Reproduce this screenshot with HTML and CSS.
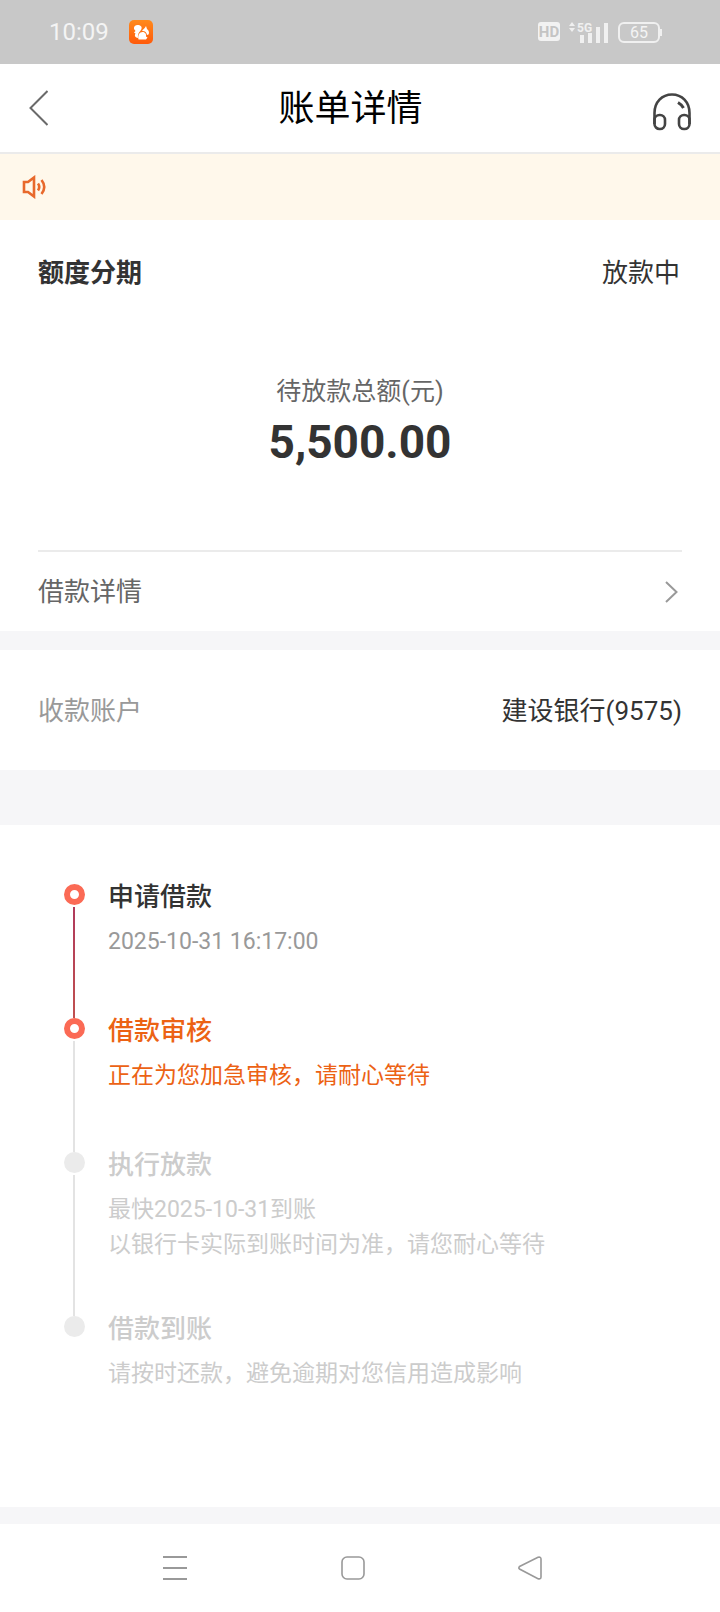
FILE: index.html
```
<!DOCTYPE html>
<html lang="zh-CN">
<head>
    <meta charset="UTF-8">
    <meta name="viewport" content="width=device-width, initial-scale=1.0">
    <title>账单详情</title>
    <link rel="stylesheet" href="styles.css">
</head>
<body>
    <div class="status-bar">
        <span class="time">10:09</span>
        <svg class="app-icon" width="24" height="24" viewBox="0 0 24 24">
            <defs>
                <linearGradient id="appBg" x1="0" y1="0" x2="0" y2="1">
                    <stop offset="0" stop-color="#ff8a1c"/>
                    <stop offset="1" stop-color="#ff5a0a"/>
                </linearGradient>
            </defs>
            <rect width="24" height="24" rx="5" fill="url(#appBg)"/>
            <!-- squirrel: tail, head, body -->
            <path d="M5 9 C4.500 6 7 4.500 9.500 5 C12.500 5.500 13.500 7.500 12 10 C10.500 12 8.500 13.500 9 18 C6.500 17.500 5 16 6.500 13.500 L5 12.500 L6.500 11 Z" fill="#fff"/>
            <path d="M17 6 L18 9 C20 10.500 20.500 13 19.500 14.500 L18 15 C17.500 12 15.500 10.500 13 11 C14 9 16 8.500 17 6 Z" fill="#fff"/>
            <path d="M9.500 19.500 C8.500 15 10.500 12 13.500 12 C16.500 12 17.500 14.500 17 16.500 L18.500 17.500 L17 19.500 Z" fill="#fff"/>
        </svg>
        <div class="status-right">
            <svg width="22" height="20" viewBox="0 0 22 20">
                <rect width="22" height="19" rx="3" fill="#f2f2f2"/>
                <text class="hd-text" x="11" y="15" text-anchor="middle">HD</text>
            </svg>
            <svg width="40" height="24" viewBox="0 0 40 24" fill="#f0f0f0">
                <path d="M4 2 L7 6 H1 Z M1 8 H7 L4 12 Z"/>
                <text class="net-text" x="9" y="12">5G</text>
                <rect x="12" y="15" width="4" height="8"/>
                <rect x="20" y="13" width="4" height="10"/>
                <rect x="28" y="7" width="4" height="16"/>
                <rect x="36" y="3" width="4" height="20"/>
            </svg>
            <span class="battery">65</span>
        </div>
    </div>

    <header class="nav-bar">
        <button class="icon-button" aria-label="返回">
            <svg width="19" height="36" viewBox="0 0 19 36" fill="none" stroke="#6a6a6a" stroke-width="2">
                <path d="M18.500 1 L1.500 18 L18.500 35"/>
            </svg>
        </button>
        <h1>账单详情</h1>
        <button class="icon-button headset" aria-label="客服">
            <svg width="38" height="38" viewBox="0 0 38 38" fill="none" stroke="#444" stroke-width="2.600">
                <path d="M1.500 31 V20 C1.500 9 9 1.500 19 1.500 C29 1.500 36.500 9 36.500 20 V31"/>
                <rect x="1.500" y="22" width="10.500" height="14" rx="5"/>
                <rect x="26" y="22" width="10.500" height="14" rx="5"/>
                <path d="M25 9.500 Q28.500 11.500 30.500 15" stroke-width="3"/>
            </svg>
        </button>
    </header>

    <div class="notice">
        <svg width="24" height="24" viewBox="0 0 24 24" fill="none" stroke="#e8692c" stroke-width="2.600">
            <path d="M2 7 H6 L12 2.500 V21.500 L6 17 H2 Z"/>
            <path d="M16 8.500 Q18.500 12 16 15.500"/>
            <path d="M19.500 5 Q25 12 19.500 19"/>
        </svg>
    </div>

    <main>
        <section class="card bill">
            <div class="row">
                <h2>额度分期</h2>
                <span class="bill-status">放款中</span>
            </div>
            <div class="total">
                <p class="total-label">待放款总额(元)</p>
                <p class="total-amount">5,500.00</p>
            </div>
            <a class="row detail-link" href="#">
                <span>借款详情</span>
                <svg width="13" height="22" viewBox="0 0 13 22" fill="none" stroke="#999" stroke-width="2">
                    <path d="M1 1 L11.500 11 L1 21"/>
                </svg>
            </a>
        </section>

        <section class="card account row">
            <span class="muted">收款账户</span>
            <span>建设银行(9575)</span>
        </section>

        <section class="card progress">
            <ol class="steps">
                <li class="step done">
                    <div class="rail"><i class="dot"></i><i class="line"></i></div>
                    <div>
                        <h3>申请借款</h3>
                        <p>2025-10-31 16:17:00</p>
                    </div>
                </li>
                <li class="step current">
                    <div class="rail"><i class="dot"></i><i class="line"></i></div>
                    <div>
                        <h3>借款审核</h3>
                        <p>正在为您加急审核，请耐心等待</p>
                    </div>
                </li>
                <li class="step">
                    <div class="rail"><i class="dot"></i><i class="line"></i></div>
                    <div>
                        <h3>执行放款</h3>
                        <p>最快2025-10-31到账<br>以银行卡实际到账时间为准，请您耐心等待</p>
                    </div>
                </li>
                <li class="step">
                    <div class="rail"><i class="dot"></i></div>
                    <div>
                        <h3>借款到账</h3>
                        <p>请按时还款，避免逾期对您信用造成影响</p>
                    </div>
                </li>
            </ol>
        </section>
    </main>

    <nav class="system-nav">
        <button class="icon-button" aria-label="最近任务">
            <svg width="24" height="24" viewBox="0 0 24 24" stroke="#999" stroke-width="2">
                <path d="M0 1 H24 M0 12 H24 M0 23 H24"/>
            </svg>
        </button>
        <button class="icon-button" aria-label="主页">
            <svg width="24" height="24" viewBox="0 0 24 24" fill="none" stroke="#999" stroke-width="1.600">
                <rect x="1" y="1" width="22" height="22" rx="5"/>
            </svg>
        </button>
        <button class="icon-button" aria-label="返回上一页">
            <svg width="24" height="24" viewBox="0 0 24 24" fill="none" stroke="#999" stroke-width="1.600">
                <path d="M1.500 10.500 L20 1.300 Q23 0.500 23 3 V21 Q23 23.500 20 22.700 L1.500 13 Q0.300 12 1.500 10.500 Z"/>
            </svg>
        </button>
    </nav>
</body>
</html>
```
FILE: styles.css
```
* {
    box-sizing: border-box;
    margin: 0;
    padding: 0;
}
body {
    font-family: Roboto, "Noto Sans CJK SC", sans-serif;
    font-size: 26px;
    line-height: 38px;
    color: #333;
    background-color: #f6f6f8;
}
svg {
    display: block;
}
a {
    color: inherit;
    text-decoration: none;
}
.icon-button {
    border: none;
    background: none;
}

/* status bar */
.status-bar {
    display: flex;
    align-items: center;
    height: 64px;
    padding: 0 60px 0 49px;
    background-color: #c8c8c8;
    color: #f4f4f4;
}
.time {
    font-size: 24px;
}
.app-icon {
    margin-left: 20px;
}
.status-right {
    display: flex;
    align-items: center;
    gap: 8px;
    margin-left: auto;
}
.hd-text {
    font-size: 15px;
    font-weight: bold;
    fill: #c4c4c4;
}
.net-text {
    font-size: 12px;
    font-weight: bold;
}
.battery {
    position: relative;
    width: 42px;
    height: 21px;
    margin-left: 2px;
    border: 2px solid #f0f0f0;
    border-radius: 6px;
    font-size: 16px;
    line-height: 18px;
    text-align: center;
}
.battery::after {
    content: "";
    position: absolute;
    top: 5px;
    right: -4px;
    width: 2px;
    height: 7px;
    background-color: #f0f0f0;
}

/* page header */
.nav-bar {
    display: flex;
    align-items: center;
    height: 90px;
    padding: 0 29px;
    border-bottom: 2px solid #ebebeb;
    background-color: #fff;
}
.nav-bar h1 {
    flex: 1;
    padding-top: 2px;
    font-size: 36px;
    font-weight: 400;
    text-align: center;
    color: #000;
}
.headset {
    padding-top: 8px;
}
.notice {
    display: flex;
    align-items: center;
    height: 66px;
    padding-left: 22px;
    background-color: #fff8eb;
}

/* cards */
.card {
    background-color: #fff;
}
.row {
    display: flex;
    align-items: center;
    justify-content: space-between;
}
.bill {
    margin-bottom: 19px;
    padding: 34px 38px 0;
}
.bill h2 {
    font-size: 26px;
    font-weight: 700;
}
.bill-status {
    padding-right: 2px;
}
.total {
    padding: 82px 0 81px;
    text-align: center;
}
.total-label {
    font-size: 25px;
    line-height: 36px;
    color: #666;
}
.total-amount {
    margin-top: 5px;
    font-size: 46px;
    font-weight: 700;
    line-height: 54px;
}
.detail-link {
    height: 81px;
    padding-right: 4px;
    border-top: 2px solid #ebebeb;
    color: #666;
}
.account {
    height: 120px;
    margin-bottom: 55px;
    padding: 2px 38px 0;
}
.muted {
    color: #999;
}

/* loan progress */
.progress {
    margin-bottom: 17px;
    padding: 59px 38px 57px 64px;
}
.steps {
    list-style: none;
}
.step {
    display: flex;
    gap: 23px;
    min-height: 134px;
    color: #ccc;
}
.step h3 {
    margin-bottom: 14px;
    font-size: 26px;
    font-weight: 500;
    line-height: 26px;
}
.step p {
    padding-bottom: 54px;
    font-size: 23px;
    line-height: 35px;
}
.rail {
    display: flex;
    flex-direction: column;
    gap: 2px;
    width: 21px;
}
.dot {
    width: 21px;
    height: 21px;
    border-radius: 50%;
    background-color: #ebebeb;
}
.line {
    flex: 1;
    width: 2px;
    margin-left: 9px;
    background-color: #e3e3e3;
}
.done .dot,
.current .dot {
    border: 6px solid #fb6a55;
    background-color: #fff;
}
.done .line {
    background: linear-gradient(#b03a5c, #c0504f);
}
.done h3 {
    color: #333;
}
.done p {
    color: #999;
}
.current {
    color: #ec6214;
}

/* system navigation */
.system-nav {
    display: flex;
    justify-content: space-between;
    height: 88px;
    padding: 0 178px 0 163px;
    background-color: #fff;
}
```
